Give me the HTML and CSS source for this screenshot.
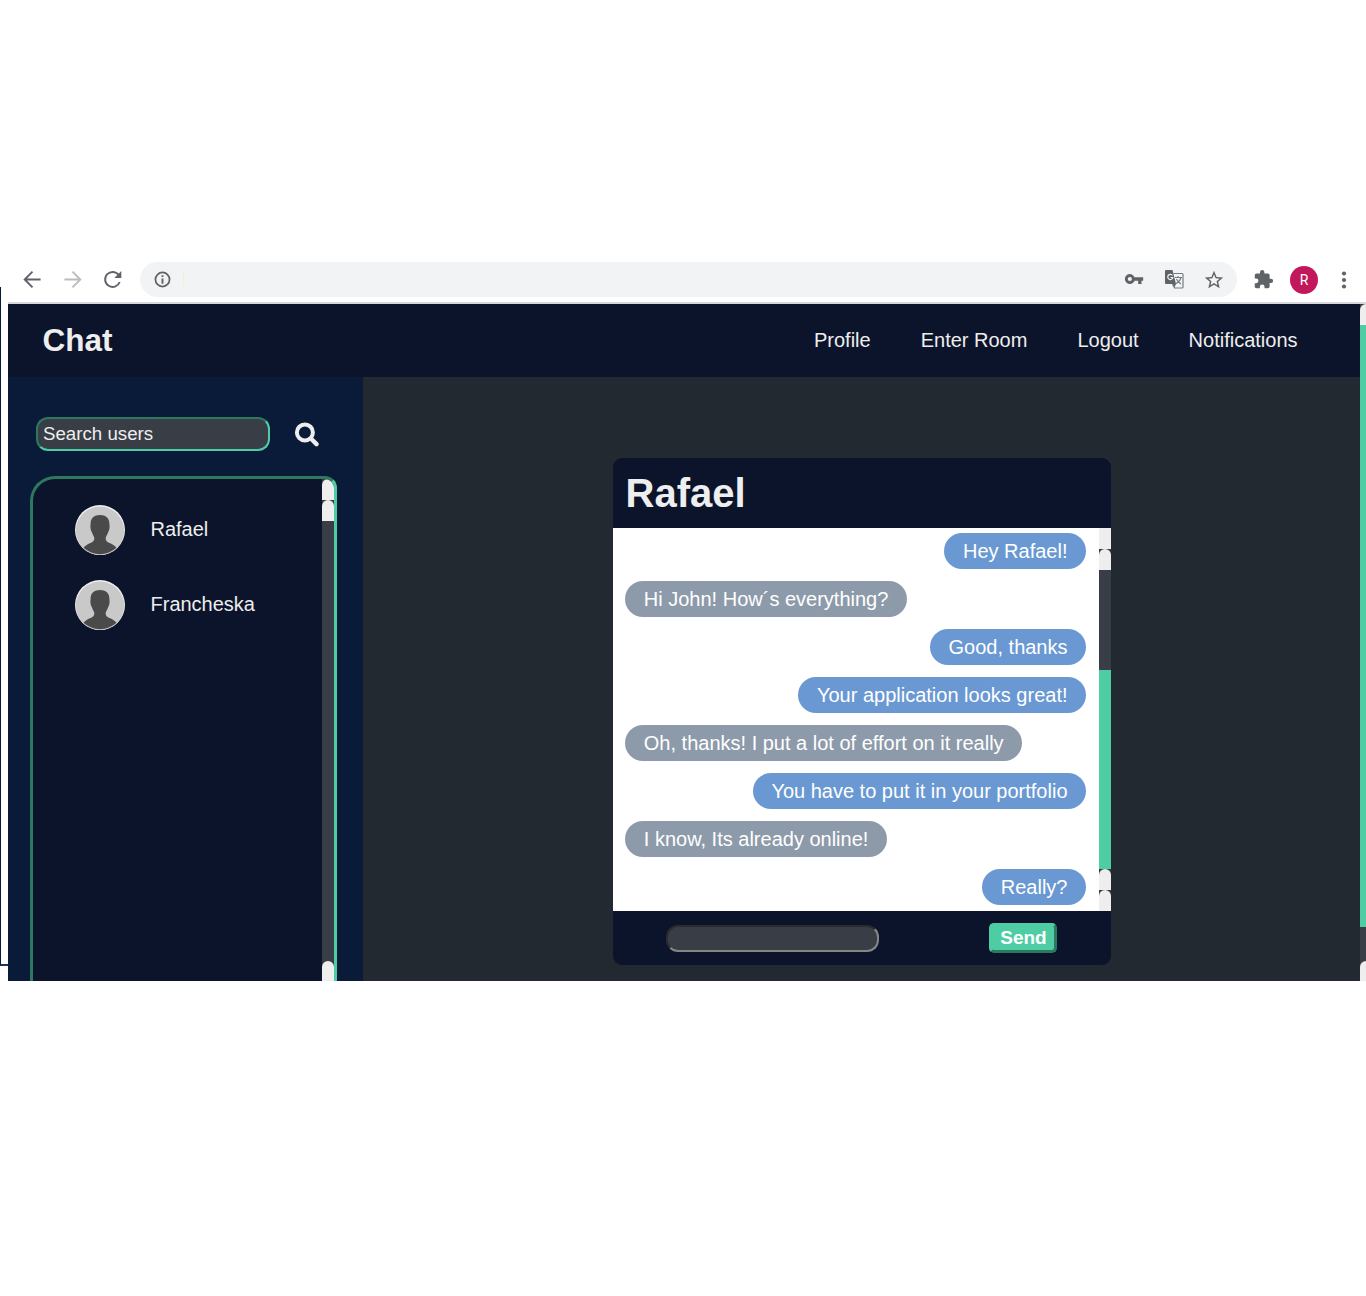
FILE: index.html
```html
<!DOCTYPE html>
<html lang="en">
<head>
<meta charset="utf-8">
<title>Chat</title>
<link rel="stylesheet" href="styles.css">
</head>
<body>
<div class="page">
  <div class="backdrop"></div>
  <div class="browser">
    <div class="toolbar">
      <svg class="tool back" viewBox="0 0 25 25"><path d="M20.600 12.500H5M12.500 4.700l-7.800 7.800 7.800 7.800"/></svg>
      <svg class="tool forward" viewBox="0 0 25 25"><path d="M4.400 12.500H20M12.500 4.700l7.800 7.800-7.800 7.800"/></svg>
      <svg class="tool reload" viewBox="0 0 25 25"><path d="M19.700 15a7.500 7.500 0 1 1-.8-6.700"/><path class="tip" d="M21.300 4v7h-7z"/></svg>
      <div class="address">
        <svg class="info" viewBox="0 0 24 24"><path d="M10.800 6.500h2.400v2.400h-2.400zm0 4.200h2.400v6.600h-2.400zm1.200-8.700a10 10 0 1 0 0 20 10 10 0 0 0 0-20zm0 17.800a7.800 7.800 0 1 1 0-15.600 7.800 7.800 0 0 1 0 15.600z"/></svg>
        <span class="caret"></span>
        <svg class="key" viewBox="0 0 24 24"><path d="M12.650 10A6 6 0 1 0 12.650 14H17v4h4v-4h2v-4zM7 14.500a2.500 2.500 0 1 1 0-5 2.500 2.500 0 0 1 0 5z"/></svg>
        <svg class="translate" viewBox="0 0 20 20">
          <path d="M9.500 4.500H18q1 0 1 1V18q0 1-1 1h-7.500l-2-4" fill="#f1f3f4" stroke="#777b80" stroke-width="1.200"/>
          <path d="M2 1h6.500l3.500 14H2q-1 0-1-1V2q0-1 1-1z"/>
          <path d="M8.500 6.500a2.600 2.600 0 1 0 .4 2H6.500" fill="none" stroke="#f1f3f4" stroke-width="1.200"/>
          <path d="M11 8.500h7M14 7v1.500M17 8.500q-1 4-5 6M12.500 10q1 3 4.500 5" fill="none" stroke="#777b80" stroke-width="1.100"/>
          <path d="M9 15h3l-1.500 3.500z"/>
        </svg>
        <svg class="star" viewBox="0 0 24 24"><path d="M22 9.240l-7.190-.62L12 2 9.190 8.630 2 9.240l5.460 4.730L5.820 21 12 17.270 18.180 21l-1.630-7.030zM12 15.400l-3.760 2.270 1-4.280-3.320-2.880 4.380-.38L12 6.100l1.710 4.040 4.380.38-3.320 2.880 1 4.280z"/></svg>
      </div>
      <svg class="puzzle" viewBox="0 0 24 24"><path d="M20.500 11H19V7a2 2 0 0 0-2-2h-4V3.500a2.500 2.500 0 0 0-5 0V5H4a2 2 0 0 0-2 2v3.800h1.500a2.700 2.700 0 0 1 0 5.400H2V20c0 1.100.9 2 2 2h3.800v-1.500a2.700 2.700 0 0 1 5.400 0V22H17a2 2 0 0 0 2-2v-4h1.500a2.500 2.500 0 0 0 0-5z"/></svg>
      <span class="account">R</span>
      <svg class="more" viewBox="0 0 6 20"><circle cx="3" cy="3.500" r="2.100"/><circle cx="3" cy="10" r="2.100"/><circle cx="3" cy="16.500" r="2.100"/></svg>
    </div>
    <div class="app">
      <div class="content">
        <header class="navbar">
          <h1>Chat</h1>
          <nav><a>Profile</a><a>Enter Room</a><a>Logout</a><a>Notifications</a></nav>
        </header>
        <div class="main">
          <aside class="sidebar">
            <div class="search">
              <div class="search-input">Search users</div>
              <svg viewBox="0 0 25 25"><circle cx="10.900" cy="10.400" r="8" fill="none" stroke="#eee" stroke-width="4"/><path d="M16.900 16.500l5.600 5.600" stroke="#eee" stroke-width="4.400" stroke-linecap="round"/></svg>
            </div>
            <div class="users">
              <div class="user-list">
                <div class="user"><svg class="avatar" viewBox="0 0 50 50"><circle cx="25" cy="25" r="25" fill="#f0f0f0"/><circle cx="25" cy="25.800" r="24.200" fill="#c9c9c9"/><path class="person" d="M25 10c-6 0-9.700 3.500-9.400 9.500-.6 3 .2 6 1.400 8 .8 2.500 2 3.500 2.300 5.500.2 2.500-1.300 3.800-3.800 5-2.500 1-4.500 2-7 4.800A24.500 24.500 0 0 0 41.500 42.800c-2.500-2.800-4.500-3.800-7-4.800-2.500-1.200-4-2.500-3.800-5 .3-2 1.500-3 2.300-5.500 1.200-2 2-5 1.400-8C34.700 13.500 31 10 25 10z"/></svg><span>Rafael</span></div>
                <div class="user"><svg class="avatar" viewBox="0 0 50 50"><circle cx="25" cy="25" r="25" fill="#f0f0f0"/><circle cx="25" cy="25.800" r="24.200" fill="#c9c9c9"/><path class="person" d="M25 10c-6 0-9.700 3.500-9.400 9.500-.6 3 .2 6 1.400 8 .8 2.500 2 3.500 2.300 5.500.2 2.500-1.300 3.800-3.800 5-2.500 1-4.500 2-7 4.800A24.500 24.500 0 0 0 41.500 42.800c-2.500-2.800-4.500-3.800-7-4.800-2.500-1.200-4-2.500-3.800-5 .3-2 1.500-3 2.300-5.500 1.200-2 2-5 1.400-8C34.700 13.500 31 10 25 10z"/></svg><span>Francheska</span></div>
              </div>
              <div class="scrollbar"><i class="cap"></i><i class="cap"></i><i class="track"></i><i class="cap last"></i></div>
            </div>
          </aside>
          <section class="room">
            <div class="chat">
              <h2>Rafael</h2>
              <div class="conversation">
                <div class="messages">
                  <p class="sent">Hey Rafael!</p>
                  <p>Hi John! How´s everything?</p>
                  <p class="sent">Good, thanks</p>
                  <p class="sent">Your application looks great!</p>
                  <p>Oh, thanks! I put a lot of effort on it really</p>
                  <p class="sent">You have to put it in your portfolio</p>
                  <p>I know, Its already online!</p>
                  <p class="sent">Really?</p>
                </div>
                <div class="scrollbar"><i class="cap top"></i><i class="cap"></i><i class="gap"></i><i class="thumb"></i><i class="cap"></i><i class="cap"></i></div>
              </div>
              <div class="compose"><div class="message-input"></div><button>Send</button></div>
            </div>
          </section>
        </div>
      </div>
      <div class="scrollbar page-scroll"><i class="cap"></i><i class="thumb"></i><i class="track"></i><i class="cap last"></i></div>
    </div>
  </div>
</div>
</body>
</html>
```
FILE: styles.css
```css
* { box-sizing: border-box; }
body {
  margin: 0;
  background: #fff;
  font-family: "Liberation Sans", Arial, sans-serif;
  font-size: 20px;
  color: #eee;
}
h1, h2, p { margin: 0; }
svg { display: block; flex: none; fill: #5f6368; }
.page { height: 1296px; padding: 256px 0 0 8px; position: relative; overflow: hidden; }
.backdrop {
  position: absolute;
  left: 0;
  top: 287px;
  width: 20px;
  height: 679px;
  border-left: 1px solid #071a38;
  border-bottom: 2px solid #1d3259;
}
.browser { position: relative; height: 725px; background: #fff; }
.toolbar {
  height: 48px;
  padding: 0 13px 0 12px;
  border-bottom: 2px solid #d6d8dd;
  display: flex;
  align-items: center;
}
.tool { width: 25px; height: 25px; margin-right: 15px; fill: none; stroke: #5f6368; stroke-width: 1.900; }
.forward { stroke: #babcbe; }
.tip { fill: #5f6368; stroke: none; }
.address {
  width: 1097px;
  height: 35px;
  border-radius: 18px;
  background: #f1f3f4;
  display: flex;
  align-items: center;
  padding: 0 13px;
}
.info { width: 19px; height: 19px; }
.caret { width: 1px; height: 15px; margin-left: 11px; background: #eef0de; }
.key { width: 20px; height: 20px; margin-left: auto; }
.translate { width: 20px; height: 20px; margin-left: 20px; }
.star { width: 22px; height: 22px; margin: 1px -1px 0 19px; }
.puzzle { width: 21px; height: 21px; margin: 0 16px 0 16px; }
.account {
  width: 28px;
  height: 28px;
  margin-top: 2px;
  border-radius: 50%;
  background: #c2185b;
  color: #fff;
  font: 14px/29px Roboto, sans-serif;
  text-align: center;
}
.more { width: 6px; height: 20px; margin: 1px 0 0 23px; }
.app { height: 677px; display: flex; background: #0c142b; }
.content { flex: 1; display: flex; flex-direction: column; }
.navbar {
  height: 73px;
  padding: 0 62.500px 0 34.500px;
  display: flex;
  align-items: center;
  justify-content: space-between;
}
h1 { font-size: 31.500px; line-height: 36px; padding-bottom: 2px; }
nav { display: flex; gap: 50px; padding-bottom: 1px; }
.main { flex: 1; display: flex; min-height: 0; }
.sidebar { width: 355px; background: #091b38; display: flex; flex-direction: column; }
.search { display: flex; padding: 40px 0 0 28px; gap: 24px; align-items: center; }
.search-input {
  width: 234px;
  height: 34px;
  border: 2px inset #4ecca3;
  border-radius: 12px;
  background: #393e46;
  padding-left: 5px;
  font-size: 18.700px;
  line-height: 29px;
}
.search svg { width: 25px; height: 25px; }
.users {
  flex: 1;
  width: 307px;
  margin: 25px 0 0 22px;
  border: 3px inset #4ecca3;
  border-bottom: 0;
  border-radius: 25px 12px 0 0;
  background: #0c142b;
  display: flex;
  overflow: hidden;
}
.user-list { flex: 1; padding: 26px 0 0 42px; display: flex; flex-direction: column; gap: 25px; }
.user { display: flex; align-items: center; gap: 25.500px; height: 50px; }
.user span { padding-bottom: 2px; }
.avatar { width: 50px; height: 50px; }
.person { fill: #4a4a4a; }
.room { flex: 1; padding: 81px 0 0 250px; background: #232931; }
.chat { width: 498px; height: 507px; border-radius: 9px; overflow: hidden; background: #0c142b; }
h2 { height: 70px; padding-left: 12.500px; font-size: 40px; line-height: 70px; }
.conversation { height: 383px; display: flex; background: #fff; }
.messages {
  flex: 1;
  display: flex;
  flex-direction: column;
  align-items: flex-start;
  gap: 12px;
  padding: 5px 13px 0 12px;
}
.messages p {
  height: 36px;
  padding: 0 18.500px 0 18.800px;
  border-radius: 18px;
  background: #8d9aaa;
  color: #fff;
  line-height: 36px;
  white-space: nowrap;
}
.messages .sent { align-self: flex-end; background: #6a98d2; }
.scrollbar { width: 12px; flex: none; background: #393e46; display: flex; flex-direction: column; }
.cap { height: 21px; background: #eee; border-radius: 6px 6px 0 0; }
.top { border-radius: 0; }
.track { flex: 1; }
.gap { height: 100px; }
.thumb { height: 199px; background: #4ecca3; }
.last { height: 20px; }
.page-scroll { width: 6px; }
.page-scroll .cap { border-radius: 6px 0 0 0; }
.page-scroll .thumb { height: 602px; }
.compose { display: flex; padding: 12px 54px 0 53px; justify-content: space-between; }
.message-input {
  width: 213px;
  height: 27px;
  margin-top: 2px;
  border: 2px solid;
  border-color: #2c2c2e #858585 #858585 #2c2c2e;
  border-radius: 12px;
  background: #393e46;
}
button {
  width: 68px;
  height: 30px;
  padding: 0 0 0 1px;
  border: 3px outset #4ecca3;
  border-radius: 5px;
  background: #4ecca3;
  color: #fff;
  font: bold 19px/22px "Liberation Sans", Arial, sans-serif;
}
```
